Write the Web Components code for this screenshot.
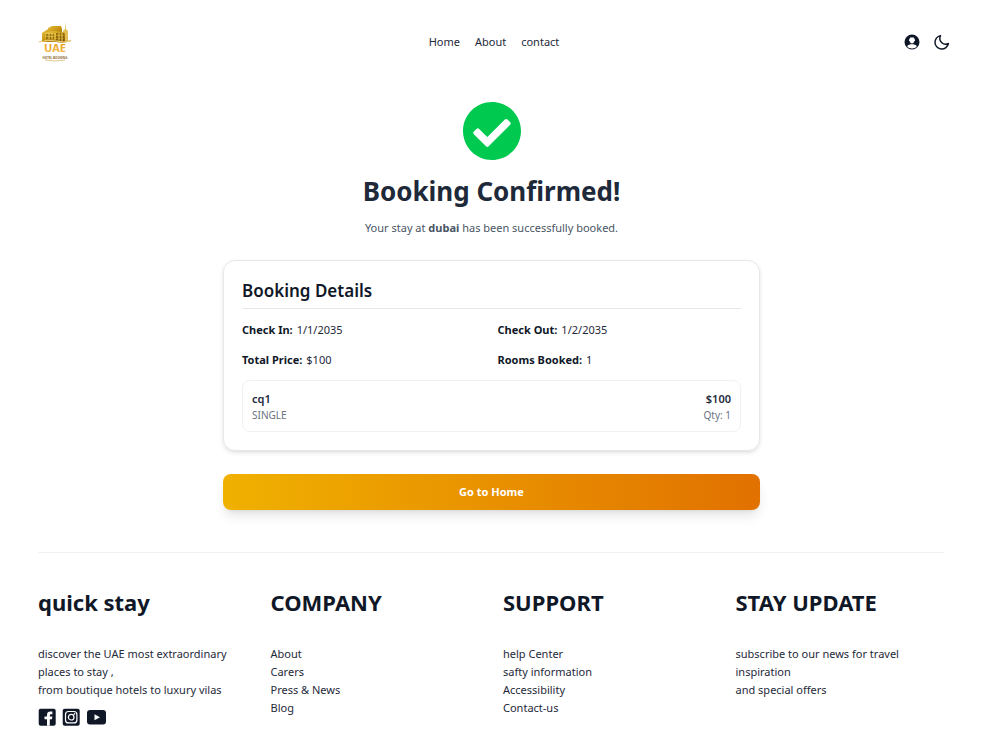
<!DOCTYPE html>
<html lang="en">
<head>
<meta charset="utf-8">
<meta name="viewport" content="width=device-width, initial-scale=1">
<title>Booking Confirmed</title>
<style>
  body {
    margin: 0;
    background: #fff;
    color: #101828;
    font-family: "Noto Sans", "Open Sans", sans-serif;
    font-size: 11px;
    line-height: 18px;
    --ink: #101828;
    --body: #1e2939;
    --muted: #4a5565;
    --faint: #6a7282;
    --line: #e5e7eb;
  }
</style>
</head>
<body>
<stay-page>
  <site-header slot="header"></site-header>
  <booking-confirmation place="dubai">
    <booking-details check-in="1/1/2035" check-out="1/2/2035" total="$100" rooms="1">
      <room-item name="cq1" type="SINGLE" price="$100" qty="1"></room-item>
    </booking-details>
  </booking-confirmation>
  <site-footer slot="footer">
    <footer-column heading="quick stay">
      <p>discover the UAE most extraordinary places to stay ,<br>from boutique hotels to luxury vilas</p>
      <social-links></social-links>
    </footer-column>
    <footer-column heading="COMPANY">
      <a href="#about">About</a>
      <a href="#carers">Carers</a>
      <a href="#press">Press &amp; News</a>
      <a href="#blog">Blog</a>
    </footer-column>
    <footer-column heading="SUPPORT">
      <a href="#help">help Center</a>
      <a href="#safety">safty information</a>
      <a href="#accessibility">Accessibility</a>
      <a href="#contact">Contact-us</a>
    </footer-column>
    <footer-column heading="STAY UPDATE">
      <p>subscribe to our news for travel inspiration<br>and special offers</p>
    </footer-column>
  </site-footer>
</stay-page>

<script>
const define = (name, render) => customElements.define(name, class extends HTMLElement {
  constructor() {
    super();
    this.attachShadow({ mode: 'open' });
  }
  connectedCallback() {
    const t = document.createElement('template');
    t.innerHTML = render(key => this.getAttribute(key) || '');
    this.shadowRoot.replaceChildren(t.content.cloneNode(true));
  }
});

define('stay-page', () => `
  <style>
    :host { display: block; padding-right: 17px; }
    main { padding: 18px 24px 42px; }
  </style>
  <slot name="header"></slot>
  <main><slot></slot></main>
  <slot name="footer"></slot>`);

define('brand-logo', () => `
  <style>
    :host { display: block; }
    svg { display: block; width: 36px; height: 40px; }
  </style>
  <svg viewBox="0 0 36 40" role="img" aria-label="UAE Hotel Booking">
    <defs>
      <linearGradient id="gold" x1="0" y1="0" x2="1" y2="1">
        <stop offset="0" stop-color="#f1cf50"/><stop offset=".5" stop-color="#c79512"/><stop offset="1" stop-color="#835906"/>
      </linearGradient>
      <linearGradient id="word" x1="0" y1="0" x2="0" y2="1">
        <stop offset="0" stop-color="#e8930f"/><stop offset="1" stop-color="#f3c04f"/>
      </linearGradient>
    </defs>
    <path d="M28.500 0l.5 7 2 2v10h-5V9l2-2z" fill="#e3bf58"/>
    <path d="M5 11l6-4v13H5zM11 6l4-2h9l1 3v12H11z" fill="url(#gold)"/>
    <path d="M8 11q9-4 20 0v9H8z" fill="url(#gold)"/>
    <path d="M9 13h8m-8 3h8m2-4h8m-8 3h8m-8 3h8" stroke="#5c4209"/>
    <path d="M12 11v8m3-8v8m3-8v8m4-8v8m3-8v8" stroke="#f5d45d"/>
    <path d="M1 20q9-4 18-2t16 0q-6 4-16 2T1 20z" fill="#a5780f"/>
    <path d="M2 20q9-3 17-1t15 0" fill="none" stroke="#f3d47c"/>
    <text x="18" y="30" text-anchor="middle" font-family="Open Sans, sans-serif" font-size="11" font-weight="700" fill="url(#word)">UAE</text>
    <text x="18" y="37" text-anchor="middle" font-family="Open Sans, sans-serif" font-size="3" font-weight="700" fill="#8d6a2c">HOTEL BOOKING</text>
    <path d="M8 38q10 2 20 0" fill="none" stroke="#e4c98f"/>
  </svg>`);

define('site-header', () => `
  <style>
    :host { display: block; }
    header {
      display: grid; grid-template-columns: 1fr auto 1fr; align-items: center;
      padding: 22px 32px 22px 37px;
    }
    .logo { justify-self: start; }
    nav { display: flex; gap: 15px; }
    nav a { color: var(--body); text-decoration: none; }
    .tools { display: flex; gap: 12px; justify-self: end; }
    button { display: block; border: 0; padding: 0; background: none; color: var(--ink); cursor: pointer; }
    svg { display: block; width: 18px; height: 18px; }
  </style>
  <header>
    <a class="logo" href="#home" aria-label="UAE Hotel Booking"><brand-logo></brand-logo></a>
    <nav aria-label="Main">
      <a href="#home">Home</a><a href="#about">About</a><a href="#contact">contact</a>
    </nav>
    <div class="tools">
      <button type="button" aria-label="Account">
        <svg viewBox="0 0 24 24" fill="currentColor"><path d="M12 2a10 10 0 1 0 0 20 10 10 0 0 0 0-20zM9 7q0-1 1-1h4q1 0 1 1v1q1 0 1 1v1q0 1-1 1-.5 3-3 3t-3-3q-1 0-1-1V9q0-1 1-1zm3 13.500c-3 0-5-1-6.500-3C7 15.500 9 15 12 15s5 .5 6.500 2.500c-1.500 2-3.500 3-6.500 3z" fill-rule="evenodd"/></svg>
      </button>
      <button type="button" aria-label="Dark mode">
        <svg viewBox="0 0 24 24" fill="none" stroke="currentColor" stroke-width="2" stroke-linejoin="round"><path d="M10 3.500A7.800 7.800 0 0 0 20.500 14 9 9 0 1 1 10 3.500z"/></svg>
      </button>
    </div>
  </header>`);

define('booking-confirmation', get => `
  <style>
    :host { display: block; max-width: 537px; margin: 0 auto; }
    .intro { text-align: center; }
    svg { display: block; width: 58px; height: 58px; margin: 0 auto 13px; }
    h1 { margin: 0 0 10px; font-size: 26px; line-height: 36px; font-weight: 700; color: var(--body); }
    p { margin: 0 0 23px; color: var(--muted); }
    strong { font-weight: 700; }
    button {
      display: block; width: 100%; margin-top: 23px; padding: 9px 18px; border: 0; border-radius: 8px;
      background: linear-gradient(90deg, #f0b100, #e17100); color: #fff;
      font: inherit; font-weight: 700; cursor: pointer;
      box-shadow: 0 8px 12px -2px rgb(0 0 0 / .1), 0 3px 5px -3px rgb(0 0 0 / .1);
    }
  </style>
  <div class="intro">
    <svg viewBox="8 8 496 496" role="img" aria-label="Confirmed"><path fill="#00c950" d="M504 256c0 136.967-111.033 248-248 248S8 392.967 8 256 119.033 8 256 8s248 111.033 248 248zM227.314 387.314l184-184c6.248-6.248 6.248-16.379 0-22.627l-22.627-22.627c-6.248-6.249-16.379-6.249-22.628 0L216 308.118l-70.059-70.059c-6.248-6.248-16.379-6.248-22.628 0l-22.627 22.627c-6.248 6.248-6.248 16.379 0 22.627l104 104c6.249 6.249 16.379 6.249 22.628.001z"/></svg>
    <h1>Booking Confirmed!</h1>
    <p>Your stay at <strong>${get('place')}</strong> has been successfully booked.</p>
  </div>
  <slot></slot>
  <button type="button">Go to Home</button>`);

define('booking-details', get => `
  <style>
    :host { display: block; }
    section {
      padding: 18px; border: 1px solid var(--line); border-radius: 12px;
      box-shadow: 0 2px 4px rgb(0 0 0 / .1), 0 1px 2px -1px rgb(0 0 0 / .1);
    }
    h2 {
      margin: 0 0 12px; padding-bottom: 5px; border-bottom: 1px solid var(--line);
      font-size: 17px; line-height: 24px; font-weight: 600;
    }
    dl { display: grid; grid-template-columns: 1fr 1fr; gap: 12px; margin: 0 0 11px; }
    dl div { display: flex; gap: 4px; }
    dt { font-weight: 700; }
    dd { margin: 0; color: var(--body); }
  </style>
  <section aria-labelledby="title">
    <h2 id="title">Booking Details</h2>
    <dl>
      <div><dt>Check In:</dt><dd>${get('check-in')}</dd></div>
      <div><dt>Check Out:</dt><dd>${get('check-out')}</dd></div>
      <div><dt>Total Price:</dt><dd>${get('total')}</dd></div>
      <div><dt>Rooms Booked:</dt><dd>${get('rooms')}</dd></div>
    </dl>
    <slot></slot>
  </section>`);

define('room-item', get => `
  <style>
    :host {
      display: flex; justify-content: space-between; padding: 9px;
      border: 1px solid #f0f1f3; border-radius: 8px;
    }
    p { margin: 0; font-weight: 600; color: var(--body); }
    .small { font-size: 10px; line-height: 14px; font-weight: 400; color: var(--faint); }
    .end { text-align: right; }
  </style>
  <div><p>${get('name')}</p><p class="small">${get('type')}</p></div>
  <div class="end"><p>${get('price')}</p><p class="small">Qty: ${get('qty')}</p></div>`);

define('site-footer', () => `
  <style>
    :host { display: block; padding: 0 39px 24px 38px; }
    footer {
      display: grid; grid-template-columns: repeat(4, 1fr); gap: 24px;
      padding-top: 33px; border-top: 1px solid #f0f1f3;
    }
  </style>
  <footer><slot></slot></footer>`);

define('footer-column', get => `
  <style>
    :host { display: block; color: var(--body); }
    h2 { margin: 0 0 27px; font-size: 22px; line-height: 32px; font-weight: 700; color: var(--ink); white-space: nowrap; }
    ::slotted(p) { margin: 0; }
    ::slotted(a) { display: block; width: fit-content; color: inherit; text-decoration: none; }
  </style>
  <h2>${get('heading')}</h2>
  <slot></slot>`);

define('social-links', () => `
  <style>
    :host { display: flex; gap: 6px; margin-top: 9px; color: var(--ink); }
    a { color: inherit; }
    svg { display: block; height: 18px; width: 18px; }
    .wide { width: 21px; }
  </style>
  <a href="#facebook" aria-label="Facebook"><svg viewBox="0 0 18 18">
    <rect x=".7" y=".7" width="17" height="17" rx="2" fill="currentColor"/>
    <path d="M9 17.700v-6.500H6.500V8.500H9V7q0-3.400 3.400-3.400h2v2.600h-1.300q-1.300 0-1.300 1.300v1h2.600l-.5 2.700h-2.100v6.500z" fill="#fff"/></svg></a>
  <a href="#instagram" aria-label="Instagram"><svg viewBox="0 0 18 18">
    <rect x=".7" y=".7" width="17" height="17" rx="2" fill="currentColor"/>
    <g fill="none" stroke="#fff" stroke-width="1.200"><rect x="3.500" y="3.500" width="11.400" height="11.400" rx="3"/><circle cx="9.200" cy="9.200" r="2.800"/></g>
    <circle cx="12.500" cy="5.900" r=".8" fill="#fff"/></svg></a>
  <a href="#youtube" aria-label="YouTube"><svg class="wide" viewBox="0 0 21 18">
    <rect x="1" y="2" width="19" height="14.500" rx="3" fill="currentColor"/>
    <path d="M8.500 6.200l5.500 3-5.500 3z" fill="#fff"/></svg></a>`);
</script>
</body>
</html>
